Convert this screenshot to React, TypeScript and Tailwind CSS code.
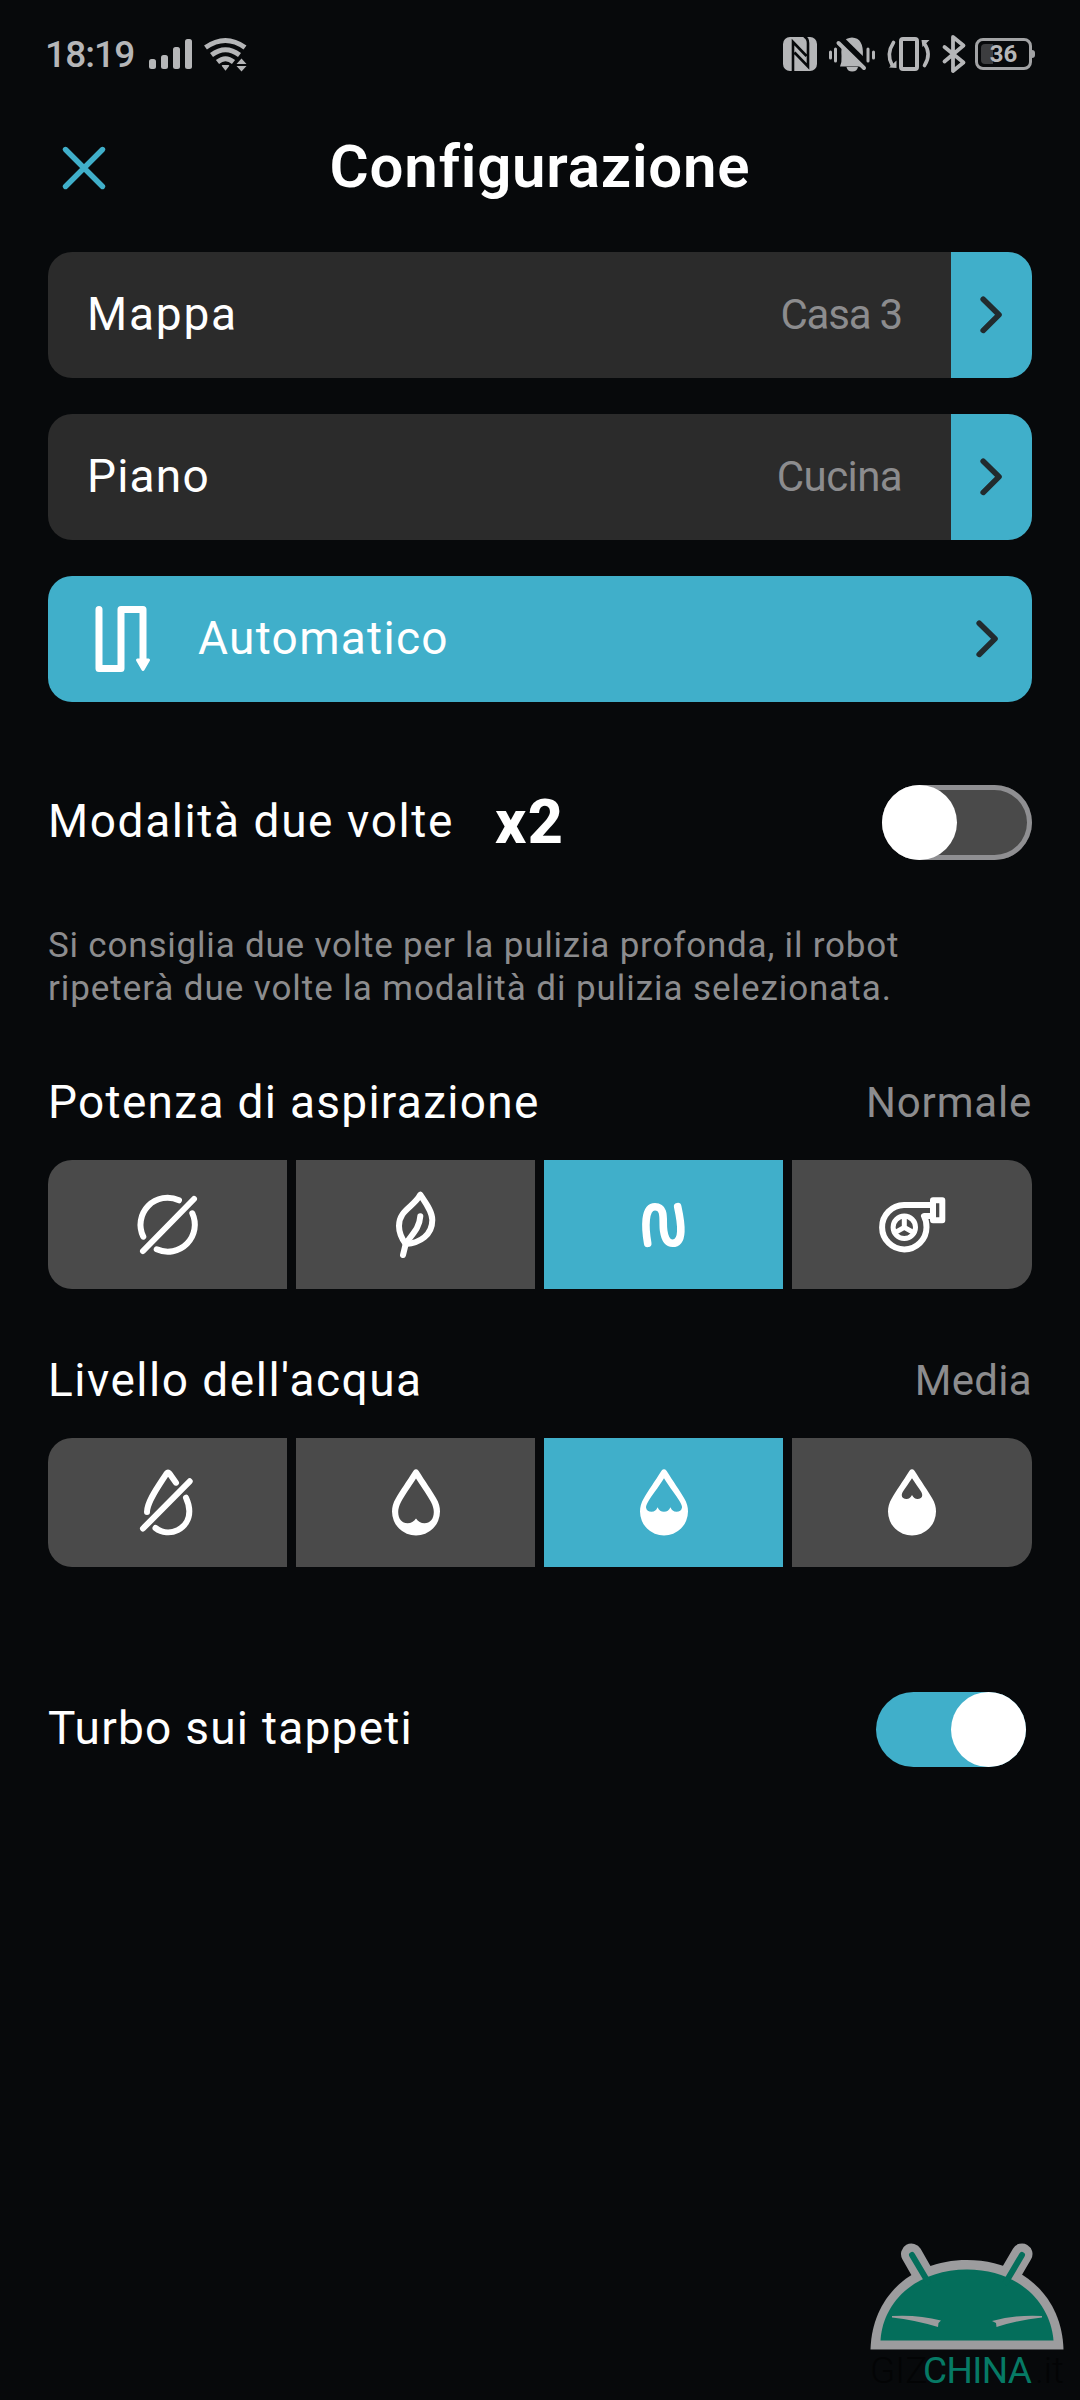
import { useState } from "react";
import type { ReactNode } from "react";
import clsx from "clsx";

const DROP =
  "M2.5 -32.3 C9 -22 16 -12 20 -5 C23 0 24 4 24 8.5 A24 24 0 0 1 -24 8.5 C-24 4 -23 0 -20 -5 C-16 -12 -9 -22 -2.5 -32.3 Q0 -35 2.5 -32.3Z";

const WATER_LEVELS = {
  low: "M0 -24.5 C6 -15 12 -7 15 -1 C17 3 17.8 6 17.8 9 C17.8 16 14 20.3 8.5 20.3 C5 20.3 2 18.5 0 15.5 C-2 18.5 -5 20.3 -8.5 20.3 C-14 20.3 -17.8 16 -17.8 9 C-17.8 6 -17 3 -15 -1 C-12 -7 -6 -15 0 -24.5Z",
  mid: "M0 -24.8 C6 -15 12 -8 15.5 -2 C17.5 1.5 18 3 18 4.5 C17.5 7.5 15.5 8.7 12.5 8.7 C9.5 8.7 7.5 7 6.5 4.2 C5 7.5 3 8.7 0 8.7 C-3 8.7 -5 7.5 -6.5 4.2 C-7.5 7 -9.5 8.7 -12.5 8.7 C-15.5 8.7 -17.5 7.5 -18 4.5 C-18 3 -17.5 1.5 -15.5 -2 C-12 -8 -6 -15 0 -24.8Z",
  high: "M0 -24.8 C3 -20 7 -15 9 -11.5 C12 -6.5 9 -4 5.5 -4 C3 -4 1.5 -5.5 0 -8 C-1.5 -5.5 -3 -4 -5.5 -4 C-9 -4 -12 -6.5 -9 -11.5 C-7 -15 -3 -20 0 -24.8Z",
};

function Glyph({ children, width = 6 }: { children: ReactNode; width?: number }) {
  return (
    <svg
      className="h-20 w-20"
      viewBox="-40 -40 80 80"
      fill="none"
      stroke="#fff"
      strokeWidth={width}
      strokeLinecap="round"
      strokeLinejoin="round"
    >
      {children}
    </svg>
  );
}

function DropIcon({ level }: { level: keyof typeof WATER_LEVELS }) {
  return (
    <svg className="h-20 w-20" viewBox="-40 -40 80 80" fill="#fff" fillRule="evenodd">
      <path d={`${DROP} ${WATER_LEVELS[level]}`} />
    </svg>
  );
}

const suctionIcons = [
  <Glyph>
    <path d="M11 -24.7 A27 27 0 0 0 -24.7 11.7 M24.3 -11.7 A27 27 0 0 1 -11.3 24.3 M-25 26 L26 -26" />
  </Glyph>,
  <Glyph>
    <path d="M4.3 -30.3 C-2 -18 -17 -15 -17 1 C-17 8 -14 14 -10.3 19 C4 18 16.3 10 16.3 -5 C16.3 -14 9 -23 4.3 -30.3Z" />
    <path d="M4.3 -8.8 C3.5 4 -5 10 -10.3 19 L-13 30" />
  </Glyph>,
  <Glyph width={7.6}>
    <path d="M-16.3 18.3 C-19 3 -20 -18.3 -9 -18.3 C2.5 -18.3 -2 -3 -.3 6 C1 15 4 18.3 8.5 18.3 C20 18.3 17.5 -1 13.7 -18.3" />
  </Glyph>,
  <Glyph>
    <path d="M20 -20 H-8 A22.2 22.2 0 1 0 14.5 2.3 C14.5 -2 13.7 -6 12 -9 H20" />
    <rect x="21" y="-24.7" width="9.3" height="20" />
    <circle cx="-7.7" cy="2.3" r="11.2" strokeWidth="5" />
    <path d="M-7.7 -8.5 V2.3 M-17 7.7 L-7.7 2.3 L1.6 7.7" strokeWidth="5" />
  </Glyph>,
];

const waterIcons = [
  <Glyph>
    <path d="M8 -20.3 L1.3 -29.7 Q0 -31.3 -1.3 -29.7 C-8 -19 -21 -2 -21 9" />
    <path d="M18 -5.3 C20 -1 21.3 4 21.3 8 A21 21 0 0 1 -12.5 25 M-25 25.5 L21.7 -21.7" />
  </Glyph>,
  <DropIcon level="low" />,
  <DropIcon level="mid" />,
  <DropIcon level="high" />,
];

function Chevron() {
  return (
    <svg className="h-[38px] w-[23px]" viewBox="0 0 23 38" fill="none" stroke="#222b2e" strokeWidth="5.6" strokeLinecap="round" strokeLinejoin="round">
      <path d="M3.2 3.2 L19 18.800 L3.2 34.4" />
    </svg>
  );
}

function StatusBar() {
  return (
    <div className="flex h-[110px] items-start justify-between pr-[48px] pl-[45px] text-[#b5b6b8]">
      <div className="flex pt-[32px]">
        <span className="w-[104px] text-[37px] leading-[46px] font-medium tracking-[-0.9px]">18:19</span>
        <svg className="mt-[3px] h-10 w-[100px]" viewBox="149 35 100 40" fill="currentColor">
          <rect x="149" y="59" width="7" height="10" rx="2.5" />
          <rect x="161" y="55" width="7" height="14" rx="2.5" />
          <rect x="173" y="47" width="7" height="22" rx="2.5" />
          <rect x="185" y="39" width="7" height="30" rx="2.5" />
          <g fill="none" stroke="currentColor" strokeWidth="5">
            <path d="M205.5 47.5 Q225.5 33.5 245 47.5" />
            <path d="M211.5 55 Q225.5 44.5 239.5 55" />
            <path d="M217.5 62 Q225.5 55.5 233.5 62" />
          </g>
          <path d="M222.5 65 H228.5 Q230 65 228.8 66.500 L225.5 70.8 L222.2 66.500 Q221 65 222.5 65Z" />
          <path d="M236.5 64 L241.5 58.5 L246.5 64Z M236.5 66 L241.5 71.5 L246.5 66Z" />
        </svg>
      </div>
      <div className="flex pt-[32px]">
        <svg className="h-11 w-[192px]" viewBox="779 32 192 44" fill="currentColor">
          {/* nfc */}
          <rect x="783" y="37" width="34" height="34" rx="7" />
          <path
            d="M793 72 V42 L806.500 56 M804 36.500 Q808 38 808 43 V66.500 L794.500 52.500"
            fill="none"
            stroke="#07090b"
            strokeWidth="2.6"
          />
          {/* muted bell */}
          <path d="M840 66.500 Q842 62 841.5 56 Q840 38 852 37.500 Q864 38 862.800 56 Q863 62 865 66.500Z M846.5 67 H858 Q857 71.5 852.2 71.500 Q847.5 71.5 846.5 67Z" />
          <path d="M840.5 39 L868 66" stroke="#07090b" strokeWidth="7" />
          <path d="M838.5 43 L864 68" stroke="currentColor" strokeWidth="4" strokeLinecap="round" />
          <path d="M830.5 52 V58 M835.5 49 V61 M868 49 V61 M873.5 52 V58" stroke="currentColor" strokeWidth="3" strokeLinecap="round" />
          {/* vibration */}
          <rect x="901" y="39" width="16" height="30" rx="2" fill="none" stroke="currentColor" strokeWidth="4" />
          <path d="M893.5 42.5 Q886 54 892 65 M924 43 Q932 54 924.5 65.5" fill="none" stroke="currentColor" strokeWidth="3.6" strokeLinecap="round" />
          <path d="M889 67.5 L896.5 60.5 V68Z M921.5 40 H929.5 L922.5 47Z" />
          {/* bluetooth */}
          <path d="M944.5 47 L963.5 62.5 L953 71 V37 L963.5 45.5 L944.5 61.500" fill="none" stroke="currentColor" strokeWidth="3.8" strokeLinejoin="round" strokeLinecap="round" />
        </svg>
        <div className="relative mt-[6px] ml-[4px] flex h-8 w-[57px] items-center justify-center rounded-[8px] border-[3px] border-[#a2a3a5]">
          <div className="absolute top-[3px] left-[3px] h-5 w-[12px] rounded-l-[4px] bg-[#3c3d3f]" />
          <div className="absolute top-[9px] -right-[6px] h-2 w-[3px] rounded-r bg-[#a2a3a5]" />
          <span className="relative text-[24px] leading-6 font-bold">36</span>
        </div>
      </div>
    </div>
  );
}

function SelectRow({ label, value }: { label: ReactNode; value: ReactNode }) {
  return (
    <button className="flex h-[126px] w-full items-stretch overflow-hidden rounded-[24px] bg-[#2b2b2b]">
      <span className="flex flex-1 items-center justify-between pr-[49px] pb-[2px] pl-[39px] text-[46px]">
        {label}
        <span className="text-[42px] text-[#8c8c8e]">{value}</span>
      </span>
      <span className="flex w-[81px] items-center justify-center bg-[#40afca]">
        <Chevron />
      </span>
    </button>
  );
}

function Segments({ icons, selected, onSelect }: { icons: ReactNode[]; selected: number; onSelect: (i: number) => void }) {
  return (
    <div className="grid h-[129px] grid-cols-[239px_239px_239px_1fr] gap-[9px] overflow-hidden rounded-[24px]">
      {icons.map((icon, index) => (
        <button
          key={index}
          onClick={() => onSelect(index)}
          className={clsx("flex items-center justify-center", index === selected ? "bg-[#40afca]" : "bg-[#4a4a4a]")}
        >
          {icon}
        </button>
      ))}
    </div>
  );
}

function Toggle({ on, onChange }: { on: boolean; onChange: (v: boolean) => void }) {
  return (
    <button
      role="switch"
      aria-checked={on}
      onClick={() => onChange(!on)}
      className={clsx(
        "flex h-[75px] w-[150px] rounded-full",
        on ? "justify-end bg-[#40afca]" : "bg-[#4a4a4a] inset-ring-[5px] inset-ring-[#8f8f92]"
      )}
    >
      <span className="h-[75px] w-[75px] rounded-full bg-white" />
    </button>
  );
}

function Watermark() {
  return (
    <div className="mt-auto mr-[16px] mb-[10px] flex w-[194px] flex-col self-end">
      <svg className="h-[110px] w-[194px]" viewBox="870 2241 194 110">
        <path d="M911.5 2254 L928 2283 M1022 2254 L1005 2283" stroke="#9c9c9e" strokeWidth="21" strokeLinecap="round" />
        <path d="M870.5 2349.5 C872 2296 912 2260 967 2260 C1022 2260 1062 2296 1063.5 2349.5Z" fill="#9c9c9e" />
        <path d="M880.5 2340.5 C883 2300 918 2269.5 967 2269.5 C1016 2269.5 1050 2300 1053.5 2340.5Z" fill="#046e5b" />
        <path d="M912 2255 L928 2282 M1022 2255 L1006 2282" stroke="#046e5b" strokeWidth="6" strokeLinecap="round" />
        <path
          d="M892 2316 Q918 2314.5 941 2320.5 L938.5 2323 L938 2327 Q915 2320 892 2317.5Z M1042 2316 Q1016 2314.5 992 2321 L996 2323 L996.5 2327 Q1019 2320 1042 2317.5Z"
          fill="#9c9c9e"
        />
      </svg>
      <div className="mt-[1px] flex text-[37px] leading-[38px] font-light whitespace-nowrap text-[#030405]">
        <span className="w-[53px]">GIZ</span>
        <span className="w-[113px] font-normal tracking-[-0.6px] text-[#067a65]">CHINA</span>
        <span>.it</span>
      </div>
    </div>
  );
}

export default function App() {
  const [twice, setTwice] = useState(false);
  const [carpetTurbo, setCarpetTurbo] = useState(true);
  const [suction, setSuction] = useState(2);
  const [water, setWater] = useState(2);

  return (
    <div className="flex h-[2400px] w-[1080px] flex-col overflow-hidden bg-[#07090b] font-['Roboto',sans-serif] text-white">
      <StatusBar />

      <header className="grid h-[142px] grid-cols-[72px_1fr_72px] items-start px-[48px]">
        <button className="flex justify-center pt-[35px]">
          <svg className="h-[46px] w-[46px]" viewBox="0 0 46 46" stroke="#40afca" strokeWidth="5.4" strokeLinecap="round">
            <path d="M4.5 4.5 L41.5 41.5 M41.5 4.5 L4.5 41.5" />
          </svg>
        </button>
        <h1 className="pt-[20px] text-center text-[60px] leading-[74px] font-semibold tracking-[0.8px]">Configurazione</h1>
      </header>

      <main className="px-[48px]">
        <div className="flex flex-col gap-[36px]">
          <SelectRow
            label={<span className="tracking-[1.8px]">Mappa</span>}
            value={<span className="tracking-[-1.2px]">Casa 3</span>}
          />
          <SelectRow
            label={<span className="tracking-[1.2px]">Piano</span>}
            value={<span className="tracking-[-0.6px]">Cucina</span>}
          />
          <button className="flex h-[126px] items-center rounded-[24px] bg-[#40afca] pr-[33px] pl-[46px]">
            <svg className="h-[70px] w-[60px]" viewBox="94 604 60 70" fill="none" stroke="#fff" strokeWidth="7" strokeLinecap="round" strokeLinejoin="round">
              <path d="M99 609.5 V668.5 H121 V609.5 H143 V664" />
              <path d="M137.5 660 H148.5 L143 669.5Z" fill="#fff" strokeWidth="3" />
            </svg>
            <span className="ml-[44px] flex-1 pb-[2px] text-left text-[46px] tracking-[1.3px]">Automatico</span>
            <Chevron />
          </button>
        </div>

        <div className="mt-[83px] flex h-[75px] items-center">
          <span className="pb-[2px] text-[46px] tracking-[1.6px]">Modalità due volte</span>
          <span className="ml-[41px] text-[61px] leading-[75px] font-extrabold tracking-[1.5px]">x2</span>
          <span className="ml-auto flex">
            <Toggle on={twice} onChange={setTwice} />
          </span>
        </div>

        <p className="mt-[64px] text-[35px] leading-[43px] text-[#8c8c8e]">
          <span className="tracking-[0.8px]">Si consiglia due volte per la pulizia profonda, il robot</span>
          <br />
          <span className="tracking-[0.93px]">ripeterà due volte la modalità di pulizia selezionata.</span>
        </p>

        <section className="mt-[60px]">
          <div className="flex h-[64px] items-center justify-between">
            <h2 className="text-[46px] tracking-[1.3px]">Potenza di aspirazione</h2>
            <span className="text-[42px] tracking-[0.8px] text-[#8c8c8e]">Normale</span>
          </div>
          <div className="mt-[26px]">
            <Segments icons={suctionIcons} selected={suction} onSelect={setSuction} />
          </div>
        </section>

        <section className="mt-[59px]">
          <div className="flex h-[64px] items-center justify-between">
            <h2 className="text-[46px] tracking-[1.5px]">Livello dell'acqua</h2>
            <span className="text-[42px] tracking-[0.3px] text-[#8c8c8e]">Media</span>
          </div>
          <div className="mt-[26px]">
            <Segments icons={waterIcons} selected={water} onSelect={setWater} />
          </div>
        </section>

        <div className="mt-[125px] flex h-[75px] items-center justify-between pr-[6px]">
          <span className="pb-[2px] text-[46px] tracking-[1.25px]">Turbo sui tappeti</span>
          <Toggle on={carpetTurbo} onChange={setCarpetTurbo} />
        </div>
      </main>

      <Watermark />
    </div>
  );
}
